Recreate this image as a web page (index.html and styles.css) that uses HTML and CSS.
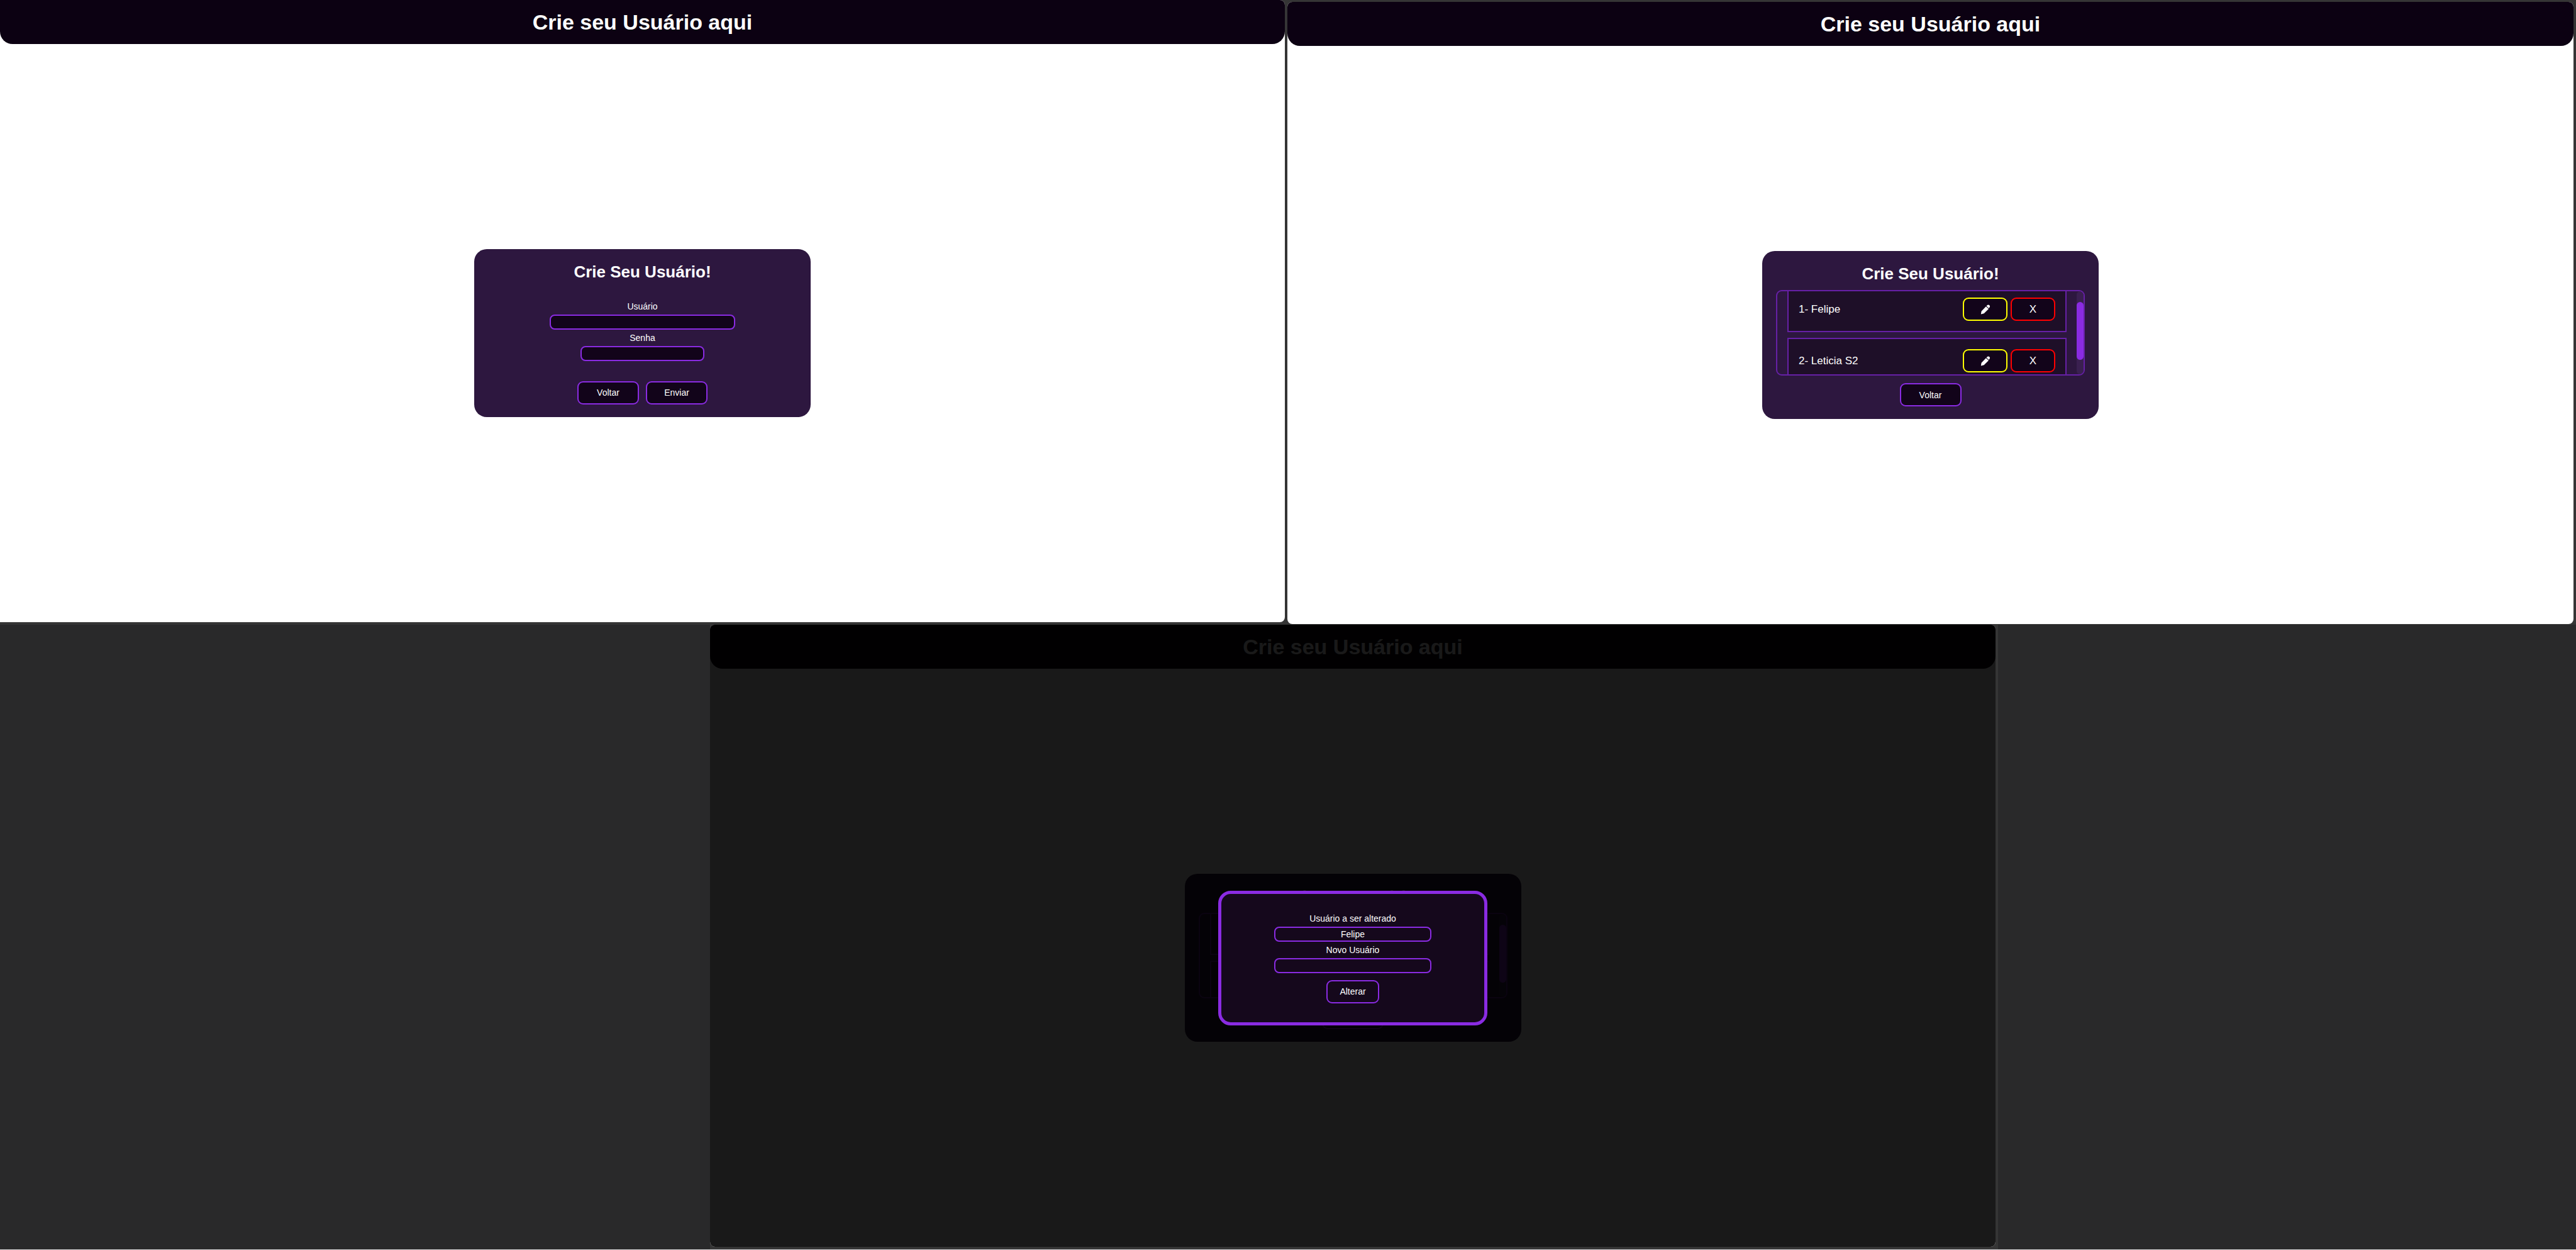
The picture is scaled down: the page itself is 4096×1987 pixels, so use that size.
FILE: index.html
```html
<!DOCTYPE html>
<html lang="pt-BR">
<head>
<meta charset="utf-8">
<title>Crie seu Usuário</title>
<link rel="stylesheet" href="styles.css">
</head>
<body>
<svg class="sprite" aria-hidden="true">
  <symbol id="pencil" viewBox="0 0 16 16">
    <path d="M.8 15.4l.8-4.6 7.2-7.6 4.2 3.9-7.3 7.2z"/>
    <path d="M9.6 2.4l1.3-1.3c1.1-1 2.5-.8 3.4.1s1.2 2.300.2 3.400l-1.200 1.300z"/>
  </symbol>
</svg>
<main class="board">
  <div class="board-top">
    <section class="screen screen-first">
      <header class="topbar"><h1>Crie seu Usuário aqui</h1></header>
      <div class="stage">
        <form class="card">
          <h2 class="card-title">Crie Seu Usuário!</h2>
          <div class="fields">
            <label for="user">Usuário</label>
            <input class="field field-wide" id="user" type="text">
            <label for="pass">Senha</label>
            <input class="field field-short" id="pass" type="password">
          </div>
          <div class="actions">
            <button class="btn" type="button">Voltar</button>
            <button class="btn" type="button">Enviar</button>
          </div>
        </form>
      </div>
    </section>
    <section class="screen screen-second">
      <header class="topbar"><h1>Crie seu Usuário aqui</h1></header>
      <div class="stage">
        <div class="card">
          <h2 class="card-title">Crie Seu Usuário!</h2>
          <div class="list-box">
            <ul class="list">
              <li class="item"><span class="name">1- Felipe</span>
                <button class="btn btn-edit" type="button" aria-label="Editar"><svg class="icon"><use href="#pencil"/></svg></button>
                <button class="btn btn-delete" type="button">X</button></li>
              <li class="item"><span class="name">2- Leticia S2</span>
                <button class="btn btn-edit" type="button" aria-label="Editar"><svg class="icon"><use href="#pencil"/></svg></button>
                <button class="btn btn-delete" type="button">X</button></li>
            </ul>
            <div class="track"><div class="thumb"></div></div>
          </div>
          <div class="actions">
            <button class="btn" type="button">Voltar</button>
          </div>
        </div>
      </div>
    </section>
  </div>
  <div class="board-bottom">
    <div class="frame">
      <section class="screen screen-third">
        <header class="topbar"><h1>Crie seu Usuário aqui</h1></header>
        <div class="stage">
          <div class="card">
            <h2 class="card-title">Crie Seu Usuário!</h2>
            <div class="list-box">
              <ul class="list">
                <li class="item"><span class="name">1- Felipe</span>
                  <button class="btn btn-edit" type="button" aria-label="Editar"><svg class="icon"><use href="#pencil"/></svg></button>
                  <button class="btn btn-delete" type="button">X</button></li>
                <li class="item"><span class="name">2- Leticia S2</span>
                  <button class="btn btn-edit" type="button" aria-label="Editar"><svg class="icon"><use href="#pencil"/></svg></button>
                  <button class="btn btn-delete" type="button">X</button></li>
              </ul>
              <div class="track"><div class="thumb"></div></div>
            </div>
            <div class="actions">
              <button class="btn" type="button">Voltar</button>
            </div>
          </div>
        </div>
        <div class="overlay">
          <form class="modal">
            <label for="old-user">Usuário a ser alterado</label>
            <input class="field" id="old-user" type="text" value="Felipe">
            <label for="new-user">Novo Usuário</label>
            <input class="field" id="new-user" type="text">
            <button class="btn btn-change" type="button">Alterar</button>
          </form>
        </div>
      </section>
    </div>
  </div>
</main>
</body>
</html>
```
FILE: styles.css
```css
* { box-sizing: border-box; }

body {
  margin: 0;
  background: #29292a;
  color: #fff;
  font-family: "Liberation Sans", Arial, sans-serif;
  font-size: 14px;
}

h1, h2, ul { margin: 0; padding: 0; }

.sprite { position: absolute; width: 0; height: 0; }

.board { min-height: 100vh; border-bottom: 1px solid #d8d8da; }

.board-top {
  display: grid;
  grid-template-columns: 2043fr 2045fr;
  align-items: start;
  gap: 4px;
  padding: 0 4px 1px 0;
  background: #353535;
}

.board-bottom {
  display: grid;
  grid-template-columns: 1129fr 2048fr 919fr;
}

.frame {
  grid-column: 2;
  padding: 0 4px 4px 0;
  background: #353535;
}

/* one application window */
.screen {
  position: relative;
  display: flex;
  flex-direction: column;
  aspect-ratio: 2044 / 989;
  overflow: hidden;
  background: #fff;
  border-radius: 8px;
}
.screen-first { border-radius: 0 8px 8px 0; }
.screen-second { margin-top: 3px; }

.topbar {
  height: 70px;
  background: #0c0112;
  border-radius: 0 0 20px 20px;
  text-align: center;
}
.topbar h1 { font-size: 34px; line-height: 70px; }

.stage {
  flex: 1;
  display: flex;
  align-items: center;
  justify-content: center;
}

.card {
  display: flex;
  flex-direction: column;
  align-items: center;
  width: 535px;
  height: 267px;
  padding: 20px 22px;
  background: #2d173f;
  border-radius: 20px;
}
.card-title { font-size: 26px; line-height: 32px; }

.fields {
  display: flex;
  flex-direction: column;
  align-items: center;
  margin-top: 26px;
}
label { line-height: 26px; }

.field {
  width: 250px;
  height: 24px;
  padding: 0 8px;
  background: #12041a;
  border: 2px solid #8a2be2;
  border-radius: 8px;
  color: #fff;
  font: inherit;
  text-align: center;
}
.field-wide { width: 295px; }
.field-short { width: 197px; }

.actions { display: flex; gap: 11px; margin-top: auto; }

.btn {
  display: flex;
  align-items: center;
  justify-content: center;
  width: 98px;
  height: 37px;
  padding: 0;
  background: #12041a;
  border: 2px solid #8a2be2;
  border-radius: 9px;
  color: #fff;
  font: inherit;
}

.list-box {
  display: flex;
  width: 100%;
  height: 136px;
  margin-top: 10px;
  overflow: hidden;
  border: 2px solid #6620a6;
  border-radius: 9px;
}
.list {
  flex: 1;
  display: flex;
  flex-direction: column;
  gap: 9px;
  margin: -8px 16px 0 16px;
  list-style: none;
}
.item {
  flex: none;
  display: flex;
  align-items: center;
  gap: 5px;
  height: 73px;
  padding: 0 16px;
  background: #1e0f28;
  border: 2px solid #6620a6;
}
.name { flex: 1; font-size: 17px; line-height: 20px; }
.btn-edit { width: 71px; border-color: #ff0; }
.btn-delete { width: 71px; border-color: #f00; font-size: 17px; }
.icon { width: 16px; height: 16px; fill: #fff; }

.track { width: 11px; padding-top: 17px; background: #3a2050; border-radius: 6px; }
.thumb { height: 92px; background: #8a2be2; border-radius: 6px; }

/* dimmed layer with the edit dialog, laid over the window */
.overlay {
  position: absolute;
  inset: 0;
  display: flex;
  align-items: center;
  justify-content: center;
  padding-top: 70px;
  background: rgba(0, 0, 0, .9);
}
.modal {
  display: flex;
  flex-direction: column;
  align-items: center;
  width: 428px;
  height: 214px;
  padding: 26px 20px;
  background: #15081c;
  border: 5px solid #8a2be2;
  border-radius: 20px;
}
.modal .field, .modal .btn { background: transparent; }
.btn-change { width: 84px; margin-top: 11px; }
```
